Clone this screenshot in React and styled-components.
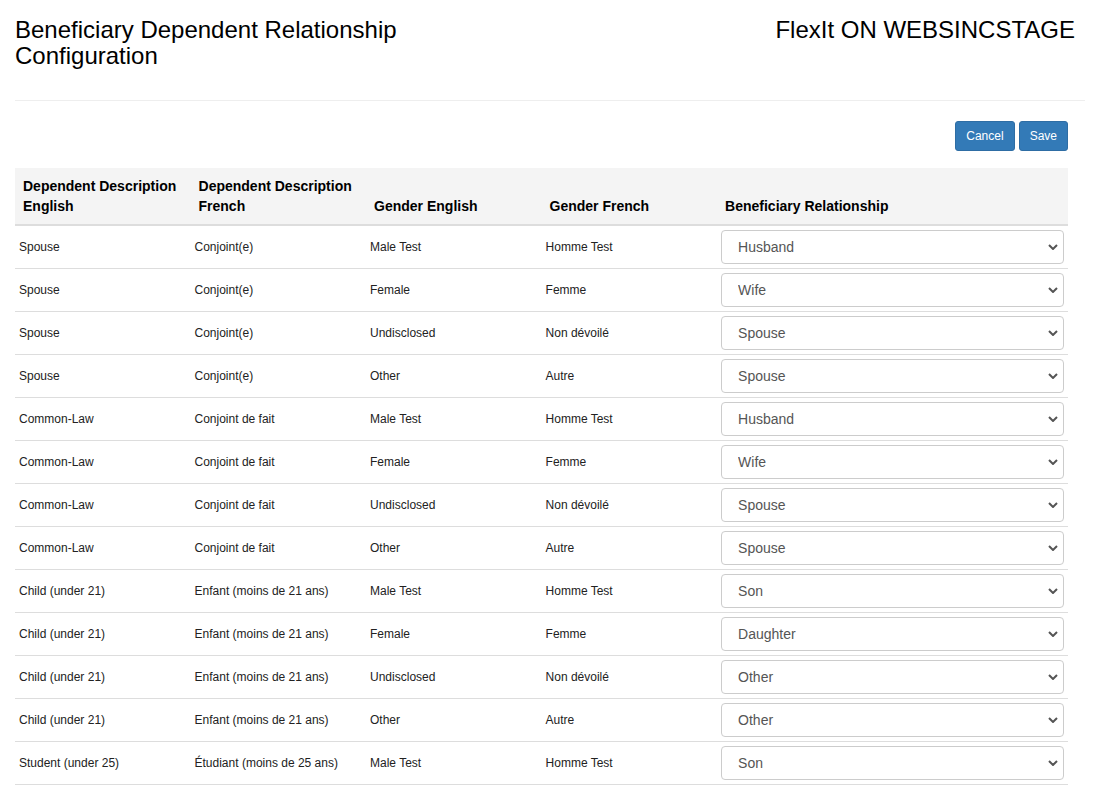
import React from 'react';
import styled, { createGlobalStyle } from 'styled-components';

const GlobalStyle = createGlobalStyle`
*, *::before, *::after {
  box-sizing: border-box;
}
body {
  margin: 0;
  background: #fff;
  font-family: "Liberation Sans", Arial, sans-serif;
  color: #333;
}
`;

const Page = styled.div`
padding: 17px 11px 0 15px;
`;

const Header = styled.header`
display: flex;
justify-content: space-between;
align-items: flex-start;
`;

const Title = styled.h1`
margin: 0;
font-size: 24px;
font-weight: normal;
line-height: 1.1;
color: #000;
width: ${p => p.width || 'auto'};
padding-right: ${p => p.pad || '0'};
`;

const Divider = styled.hr`
margin: 30px 0 0;
border: 0;
border-top: 1px solid #eee;
`;

const Body = styled.div`
padding-right: 17px;
`;

const Toolbar = styled.div`
display: flex;
justify-content: flex-end;
gap: 4px;
margin: 20px 0 17px;
`;

const Button = styled.button`
background: #337ab7;
border: 1px solid #2e6da4;
border-radius: 3px;
color: #fff;
font-family: "Liberation Sans", Arial, sans-serif;
font-size: 12px;
line-height: 1.5;
padding: 5px 10px;
cursor: pointer;
`;

const Table = styled.table`
width: 100%;
border-collapse: collapse;
table-layout: fixed;
`;

const Th = styled.th`
background: #f4f4f4;
text-align: left;
vertical-align: bottom;
font-size: 14px;
font-weight: bold;
line-height: 20px;
color: #000;
padding: 8px;
border-bottom: 2px solid #ddd;
width: ${p => p.wide ? '33.33%' : '16.67%'};
`;

const Td = styled.td`
font-size: 12px;
color: #222;
padding: 4px;
height: 42px;
vertical-align: middle;
border-bottom: 1px solid #ddd;
`;

const SelectWrap = styled.div`
position: relative;
`;

const Select = styled.select`
appearance: none;
-webkit-appearance: none;
display: block;
width: 100%;
height: 34px;
padding: 6px 30px 6px 16px;
font-family: "Liberation Sans", Arial, sans-serif;
font-size: 14px;
color: #555;
background: #fff;
border: 1px solid #ccc;
border-radius: 4px;
`;

const Chevron = styled.svg`
position: absolute;
right: 6px;
top: 14px;
pointer-events: none;
`;

const options = ['Husband', 'Wife', 'Spouse', 'Son', 'Daughter', 'Other'];

const rows = [
  ['Spouse', 'Conjoint(e)', 'Male Test', 'Homme Test', 'Husband'],
  ['Spouse', 'Conjoint(e)', 'Female', 'Femme', 'Wife'],
  ['Spouse', 'Conjoint(e)', 'Undisclosed', 'Non dévoilé', 'Spouse'],
  ['Spouse', 'Conjoint(e)', 'Other', 'Autre', 'Spouse'],
  ['Common-Law', 'Conjoint de fait', 'Male Test', 'Homme Test', 'Husband'],
  ['Common-Law', 'Conjoint de fait', 'Female', 'Femme', 'Wife'],
  ['Common-Law', 'Conjoint de fait', 'Undisclosed', 'Non dévoilé', 'Spouse'],
  ['Common-Law', 'Conjoint de fait', 'Other', 'Autre', 'Spouse'],
  ['Child (under 21)', 'Enfant (moins de 21 ans)', 'Male Test', 'Homme Test', 'Son'],
  ['Child (under 21)', 'Enfant (moins de 21 ans)', 'Female', 'Femme', 'Daughter'],
  ['Child (under 21)', 'Enfant (moins de 21 ans)', 'Undisclosed', 'Non dévoilé', 'Other'],
  ['Child (under 21)', 'Enfant (moins de 21 ans)', 'Other', 'Autre', 'Other'],
  ['Student (under 25)', 'Étudiant (moins de 25 ans)', 'Male Test', 'Homme Test', 'Son'],
];

const RelationSelect = ({ value }) => (
  <SelectWrap>
    <Select defaultValue={value}>
      {options.map(o => <option key={o}>{o}</option>)}
    </Select>
    <Chevron width="10" height="6" viewBox="0 0 10 6">
      <path d="M1 1 L5 5 L9 1" fill="none" stroke="#555" strokeWidth="2" />
    </Chevron>
  </SelectWrap>
);

const App = () => {
  return (
    <Page>
      <GlobalStyle />
      <Header>
        <Title width="420px">Beneficiary Dependent Relationship Configuration</Title>
        <Title pad="10px">FlexIt ON WEBSINCSTAGE</Title>
      </Header>
      <Divider />
      <Body>
        <Toolbar>
          <Button>Cancel</Button>
          <Button>Save</Button>
        </Toolbar>
        <Table>
          <thead>
            <tr>
              <Th>Dependent Description English</Th>
              <Th>Dependent Description French</Th>
              <Th>Gender English</Th>
              <Th>Gender French</Th>
              <Th wide>Beneficiary Relationship</Th>
            </tr>
          </thead>
          <tbody>
            {rows.map((r, i) => (
              <tr key={i}>
                <Td>{r[0]}</Td>
                <Td>{r[1]}</Td>
                <Td>{r[2]}</Td>
                <Td>{r[3]}</Td>
                <Td><RelationSelect value={r[4]} /></Td>
              </tr>
            ))}
          </tbody>
        </Table>
      </Body>
    </Page>
  );
};

export default App;
